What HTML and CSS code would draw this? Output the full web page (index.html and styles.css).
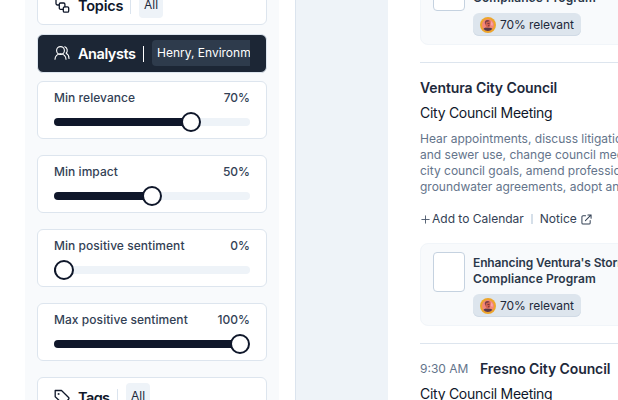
FILE: index.html
```html
<!DOCTYPE html>
<html lang="en">
<head>
<meta charset="utf-8">
<title>Meetings</title>
<link rel="stylesheet" href="styles.css">
</head>
<body>
<svg class="defs" width="0" height="0">
  <symbol id="face" viewBox="0 0 16 16">
    <circle cx="8" cy="8" r="8" fill="#eda52b"/>
    <circle cx="8" cy="8" r="6" fill="#f2867a"/>
    <path d="M3.500 12C4 10.500 6 10.800 7 10.500l3 .3c1.500.2 2 .8 2.300 1.200A6 6 0 0 1 3.500 12z" fill="#593a48"/>
    <path d="M5 4.500C6 2.500 10 2.500 10.500 5l-.5 4-2 2-2.300-2z" fill="#d0604f"/>
    <path d="M4.800 6C4.500 3 8 2.300 9.500 3.800L8.300 4.600 6 5.300 5.500 8z" fill="#7b4048"/>
    <path d="M11 4l2 2.500-.5 2.500-1.700-1z" fill="#f8a3aa"/>
    <path d="M7.500 6.500l2 .2M8 8.700l1.500.1" stroke="#6b2d35" stroke-width=".9"/>
  </symbol>
</svg>
<div class="app">
  <aside class="sidebar">
    <div class="filters">
      <div class="filter topics">
        <svg class="icon" viewBox="0 0 16 16"><rect x="9.300" y="8.800" width="5.400" height="5.400" rx="1.300"/><path d="M9.300 11.300H6.500A1.200 1.200 0 0 1 5.300 10V6.200A1.200 1.200 0 0 1 6.500 5h3.200A1.200 1.200 0 0 1 10.900 6.200V8.800M5.300 7H3.500A1.500 1.500 0 0 1 2 5.500V2"/></svg>
        <span class="name n-topics">Topics</span><i class="bar"></i><span class="chip">All</span>
      </div>
      <div class="filter active">
        <svg class="icon" viewBox="0 0 16 16"><circle cx="6.500" cy="5.500" r="3.900"/><path d="M1 14.200a5.500 5.500 0 0 1 11 0M10.800 1.800a3.900 3.900 0 0 1 1.300 6.400c1.900 1 2.900 3 2.900 5.200"/></svg>
        <span class="name n-analysts">Analysts</span><i class="bar"></i><span class="chip wide">Henry, Environm</span>
      </div>
      <div class="slider"><div class="row"><span>Min relevance</span><span class="value">70%</span></div><div class="track"><div class="fill" style="width:137px"></div><div class="thumb"></div></div></div>
      <div class="slider"><div class="row"><span>Min impact</span><span class="value">50%</span></div><div class="track"><div class="fill" style="width:98px"></div><div class="thumb"></div></div></div>
      <div class="slider"><div class="row"><span>Min positive sentiment</span><span class="value">0%</span></div><div class="track"><div class="fill" style="width:10px"></div><div class="thumb"></div></div></div>
      <div class="slider"><div class="row"><span>Max positive sentiment</span><span class="value">100%</span></div><div class="track"><div class="fill" style="width:186px"></div><div class="thumb"></div></div></div>
      <div class="filter">
        <svg class="icon" viewBox="0 0 16 16"><path d="M1.200 1.500h6.300L14.600 8.500a1.200 1.200 0 0 1 0 1.700l-4.400 4.400a1.200 1.200 0 0 1-1.700 0L1.200 7.800z"/><circle cx="4.600" cy="5" r=".35"/></svg>
        <span class="name n-tags">Tags</span><i class="bar"></i><span class="chip">All</span>
      </div>
    </div>
  </aside>
  <main class="feed">
    <div class="notice">
      <div class="thumbnail"></div>
      <div class="info"><h4><span class="tight">Enhancing Ventura's Stormwater</span><br>Compliance Program</h4>
      <div class="pill"><svg class="avatar"><use href="#face"/></svg><span>70% relevant</span></div></div>
    </div>
    <article class="meeting">
      <h3>Ventura City Council</h3>
      <div class="kind">City Council Meeting</div>
      <p class="desc">Hear appointments, discuss litigation, water<br>and sewer use, change council meeting times,<br>city council goals, amend professional service,<br>groundwater agreements, adopt annual budget</p>
      <div class="actions">
        <svg class="plus" viewBox="0 0 10 10"><path d="M5 .5v9M.5 5h9"/></svg><span>Add to Calendar</span><i></i><span>Notice</span>
        <svg class="ext" viewBox="0 0 12 12"><path d="M5 2H2.200A1.200 1.200 0 0 0 1 3.200v6.600A1.200 1.200 0 0 0 2.200 11h6.600A1.200 1.200 0 0 0 10 9.800V7M7.500 1H11v3.500M11 1L4.800 7.200"/></svg>
      </div>
      <div class="notice">
        <div class="thumbnail"></div>
        <div class="info"><h4><span class="tight">Enhancing Ventura's Stormwater</span><br>Compliance Program</h4>
        <div class="pill"><svg class="avatar"><use href="#face"/></svg><span>70% relevant</span></div></div>
      </div>
    </article>
    <article class="meeting">
      <h3><time>9:30 AM</time>Fresno City Council</h3>
      <div class="kind">City Council Meeting</div>
    </article>
  </main>
</div>
</body>
</html>
```

FILE: styles.css
```css
* { box-sizing: border-box; }
body { margin: 0; overflow: hidden; font: 12px/16px Inter, "Liberation Sans", sans-serif; color: #334155; }
.defs { position: absolute; }
.app { display: flex; width: 618px; height: 400px; overflow: hidden; background: #eef3f8; }
.sidebar { flex: none; width: 296px; padding: 0 16px 0 25px; background: #fff; border-right: 1px solid #dbe4ee; }
.filters { width: 254px; height: 430px; padding: 0 12px; background: #f8fafc; display: flow-root; }
.filter { display: flex; align-items: center; height: 39px; padding: 0 16px; border: 1px solid #dde5ee; border-radius: 6px; background: #fff; color: #0f172a; white-space: nowrap; }
.topics { margin-top: -14px; }
.active { margin: 9px 0 8px; background: #1c2635; color: #fff; }
.icon { flex: none; width: 16px; height: 16px; fill: none; stroke: currentColor; stroke-width: 1.3; stroke-linecap: round; stroke-linejoin: round; }
.active .icon { stroke-width: 1.1; margin-top: -1px; }
.name { flex: none; margin-left: 8px; margin-top: 1px; font-size: 14.5px; line-height: 20px; font-weight: 600; }
.n-topics { width: 44px; letter-spacing: -.2px; }
.n-analysts { width: 57px; letter-spacing: -.45px; }
.n-tags { width: 31px; margin-top: 2px; letter-spacing: -.6px; }
.bar { flex: none; width: 1px; height: 16px; margin: 0 8px; background: #dbe4ee; }
.active .bar { background: #fff; }
.chip { flex: none; height: 26px; margin-top: -1px; padding: 0 5px; border-radius: 4px; background: #eef3f8; color: #1e293b; line-height: 26px; }
.active .chip { flex: 1; overflow: hidden; border-radius: 4px 0 0 4px; padding-right: 0; background: #2e3b4c; color: #fff; }
.slider { height: 58px; margin-bottom: 16px; padding: 8px 16px; border: 1px solid #dde5ee; border-radius: 6px; background: #fff; }
.row { display: flex; justify-content: space-between; font-weight: 500; letter-spacing: .05px; color: #334155; }
.value { letter-spacing: 0; }
.track { display: flex; align-items: center; height: 8px; margin-top: 12px; border-radius: 4px; background: #eef3f8; }
.fill { height: 8px; border-radius: 4px 0 0 4px; background: #0f172a; }
.thumb { flex: none; width: 20px; height: 20px; margin-left: -10px; border: 2px solid #0f172a; border-radius: 50%; background: #fff; }
.feed { flex: none; width: 300px; height: 460px; margin-left: 92px; padding-left: 32px; background: #fff; display: flow-root; white-space: nowrap; }
.feed > .notice { margin-top: -38px; margin-bottom: 17px; }
.meeting { height: 281px; border-top: 1px solid #dde5ee; padding-top: 15px; }
h3, h4, p { margin: 0; }
h3 { display: flex; align-items: center; height: 20px; font-size: 14px; line-height: 20px; font-weight: 600; letter-spacing: -.1px; color: #1e293b; }
time { width: 60px; font-size: 12px; font-weight: 400; letter-spacing: 0; color: #64748b; }
.kind { margin-top: 5px; font-size: 14px; line-height: 20px; letter-spacing: -.28px; color: #0f172a; }
.desc { margin-top: 8px; color: #64748b; }
.actions { display: flex; align-items: center; height: 16px; margin-top: 16px; color: #334155; }
.actions i { width: 2px; height: 10px; margin: 0 7px; background: #d5dfe9; }
.plus { width: 9px; height: 9px; margin: 0 2px 0 1px; stroke: #475569; fill: none; }
.ext { width: 11px; height: 11px; margin-left: 4px; fill: none; stroke: #334155; stroke-width: 1.1; stroke-linecap: round; stroke-linejoin: round; }
.notice { display: flex; height: 83px; padding: 9px 13px; border: 1px solid #f1f5f9; border-radius: 8px; background: #f8fafc; }
.meeting .notice { margin-top: 16px; }
.thumbnail { flex: none; width: 32px; height: 40px; margin: -1px 8px 0 -1px; border: 1px solid #c5d2e0; border-radius: 4px; background: #fff; }
h4 { margin-top: 2px; font-size: 12px; line-height: 16px; font-weight: 600; letter-spacing: .08px; color: #2b384a; }
.tight { letter-spacing: -.12px; }
.pill { display: flex; align-items: center; width: 108px; height: 23px; margin-top: 7px; padding-left: 7px; border-radius: 6px; background: #dde5ed; color: #1e293b; letter-spacing: -.08px; box-shadow: inset 0 -1px 0 #d0dae5; }
.avatar { width: 16px; height: 16px; margin-right: 4px; }
```
